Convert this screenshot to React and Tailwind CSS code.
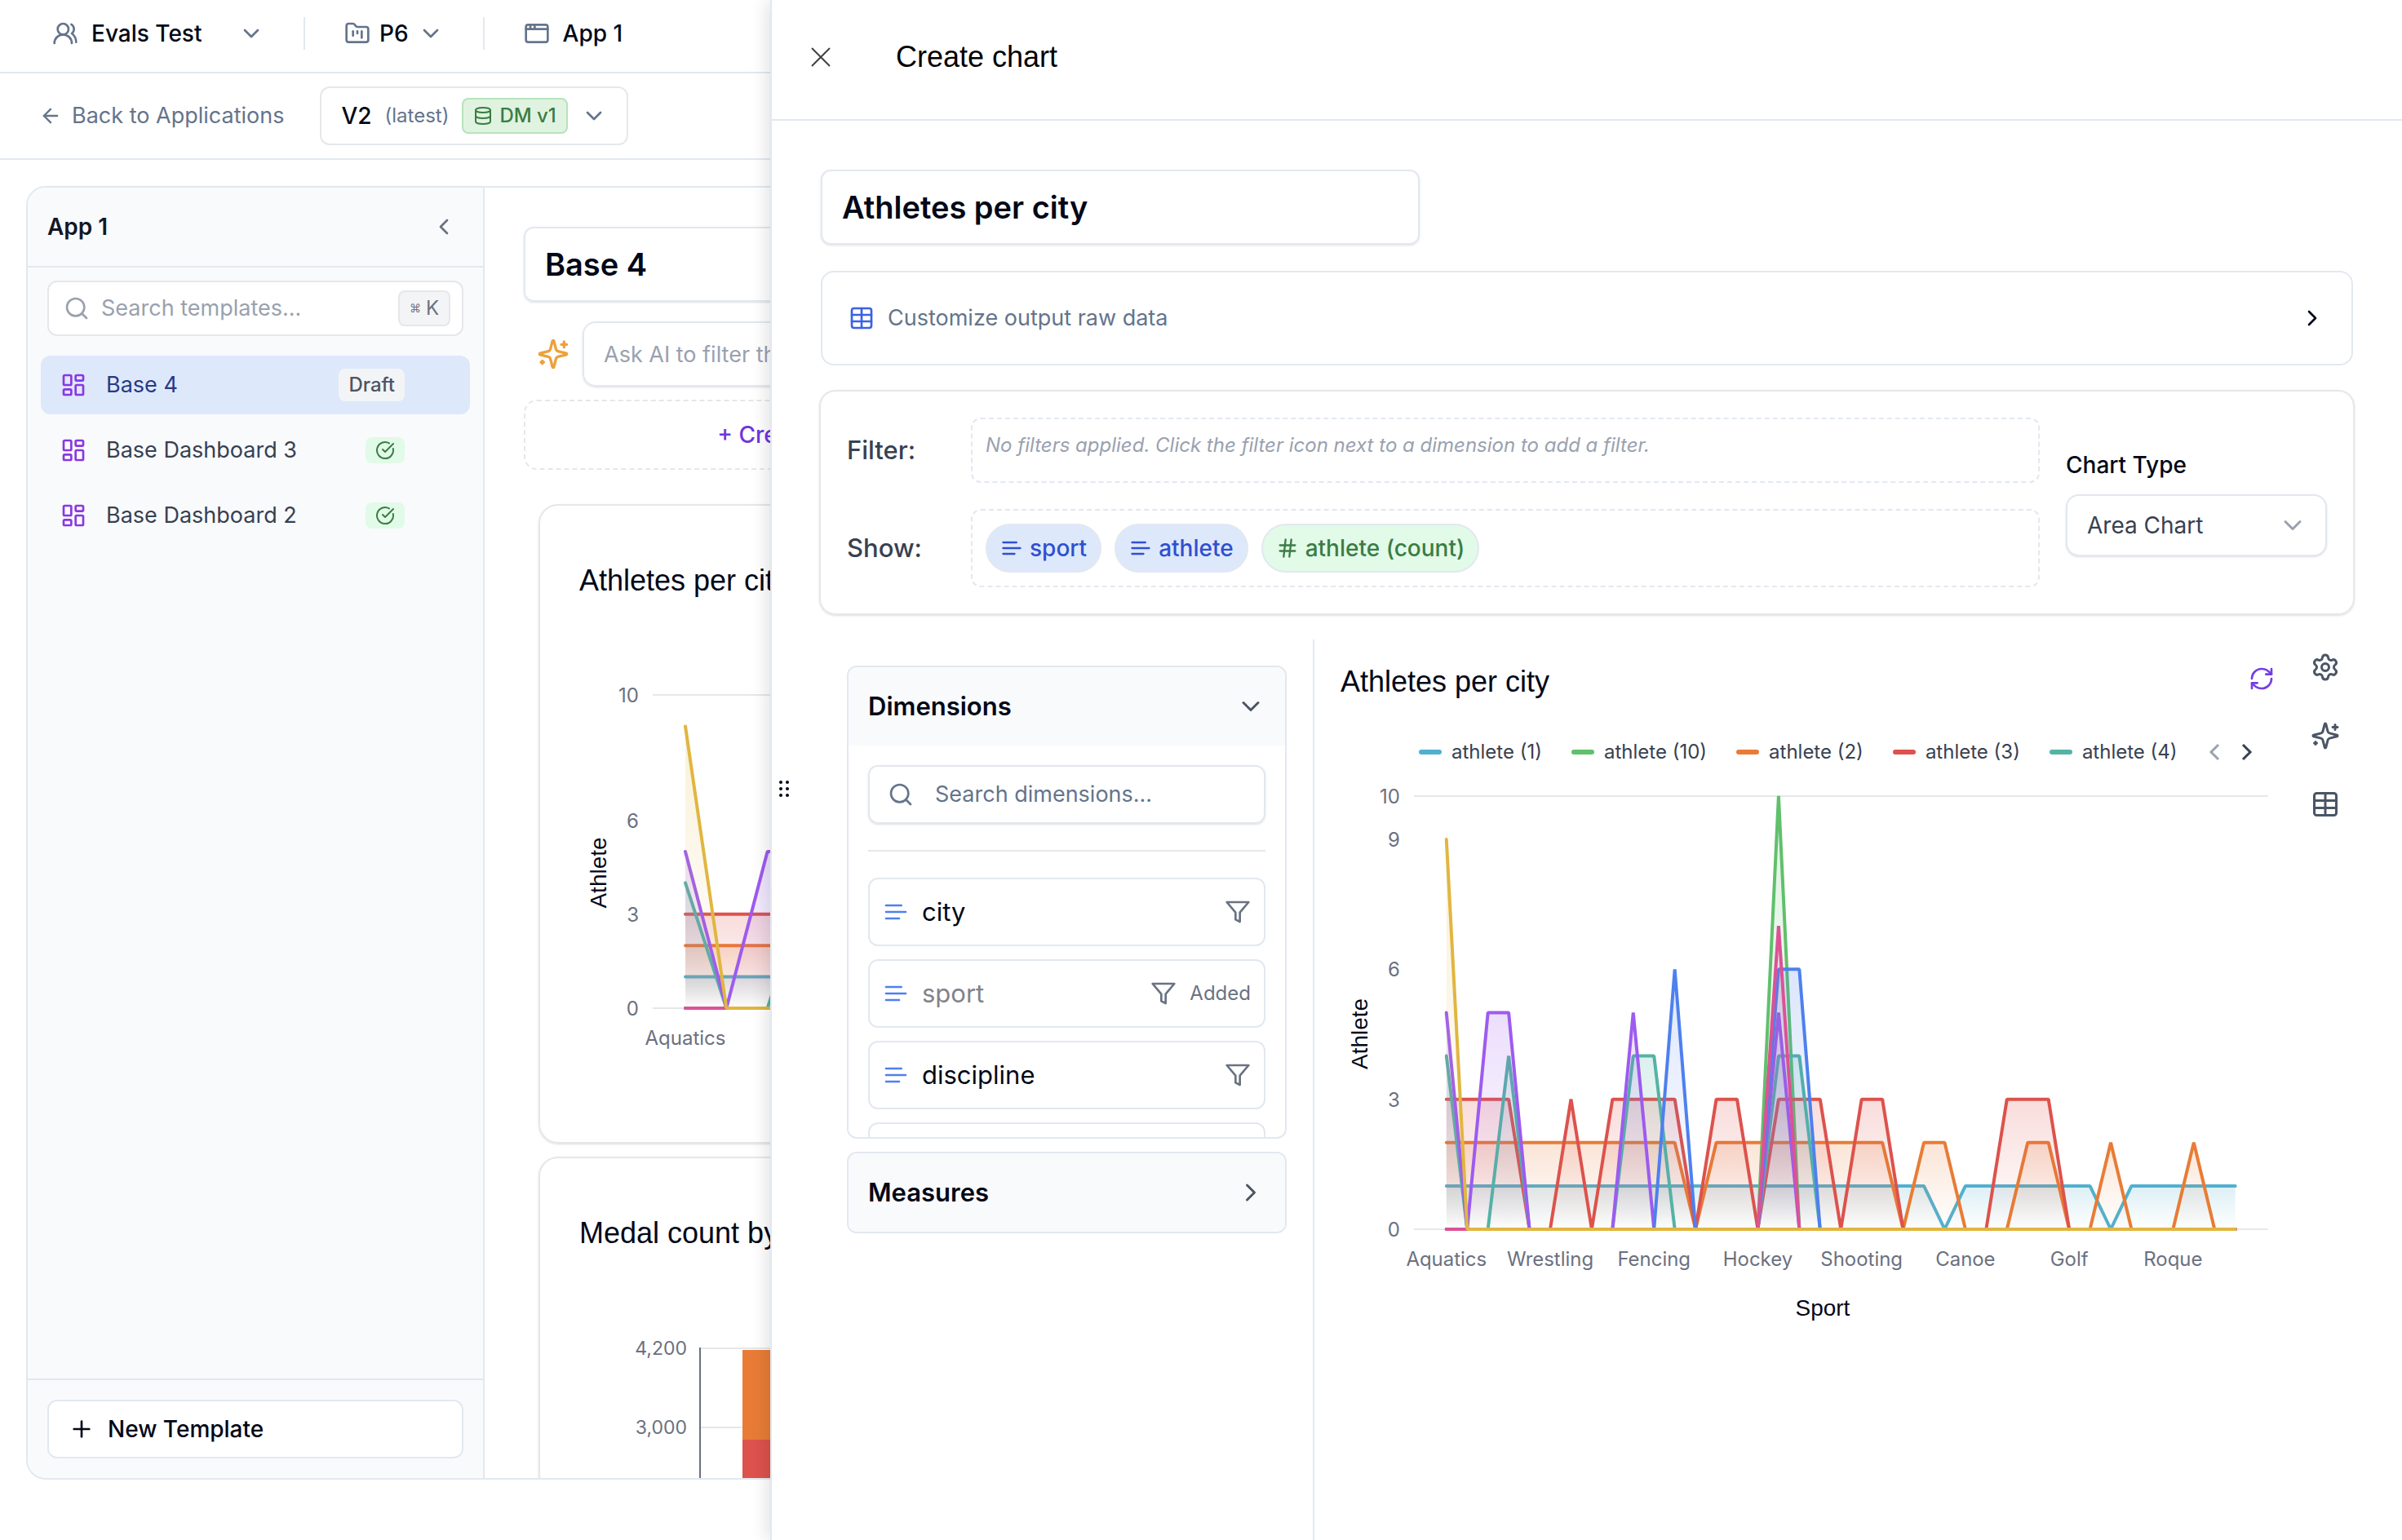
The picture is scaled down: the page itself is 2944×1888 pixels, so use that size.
// src/App.jsx
import React, { useState } from 'react';
import {
  AppWindow,
  ArrowLeft,
  ChevronDown,
  ChevronLeft,
  ChevronRight,
  CircleCheckBig,
  Database,
  FolderKanban,
  Hash,
  LayoutDashboard,
  Plus,
  RefreshCw,
  Search,
  Settings,
  Table,
  UsersRound,
} from 'lucide-react';

// non-zero values only, keyed by category index
const SERIES = [
  { name: 'athlete (1)', color: '#52b0cf', value: 1, at: [[0, 23], [25, 31], [33, 38]] },
  { name: 'athlete (10)', color: '#60c06c', value: 10, at: [[16, 16]] },
  { name: 'athlete (2)', color: '#e87c36', value: 2, at: [[0, 11], [13, 21], [23, 24], [28, 29], [32, 32], [36, 36]] },
  { name: 'athlete (3)', color: '#dd524c', value: 3, at: [[0, 3], [6, 6], [8, 11], [13, 14], [16, 18], [20, 21], [27, 29]] },
  { name: 'athlete (4)', color: '#54b3a4', value: 4, at: [[0, 0], [3, 3], [9, 10], [16, 17]] },
  { name: 'athlete (5)', color: '#9d5bef', value: 5, at: [[0, 0], [2, 3], [9, 9], [16, 16]] },
  { name: 'athlete (6)', color: '#4e80ee', value: 6, at: [[11, 11], [16, 17]] },
  { name: 'athlete (7)', color: '#db5296', value: 7, at: [[16, 16]] },
  { name: 'athlete (9)', color: '#e1b640', value: 9, at: [[0, 0]] },
];

const CATEGORY_COUNT = 39;
const SPORTS = ['Aquatics', 'Wrestling', 'Fencing', 'Hockey', 'Shooting', 'Canoe', 'Golf', 'Roque'];

const TEMPLATES = [
  { name: 'Base 4', status: 'draft', active: true },
  { name: 'Base Dashboard 3', status: 'published' },
  { name: 'Base Dashboard 2', status: 'published' },
];

const DIMENSIONS = [
  { name: 'city' },
  { name: 'sport', added: true },
  { name: 'discipline' },
];

const valueAt = (series, i) =>
  series.at.some(([from, to]) => i >= from && i <= to) ? series.value : 0;

const Sparkles = ({ size, className }) => (
  <svg
    width={size}
    height={size}
    viewBox="0 0 24 24"
    fill="none"
    stroke="currentColor"
    strokeWidth="2"
    strokeLinecap="round"
    strokeLinejoin="round"
    className={className}
  >
    <path d="M9.937 15.5A2 2 0 0 0 8.5 14.063l-6.135-1.582a.5.5 0 0 1 0-.962L8.5 9.936A2 2 0 0 0 9.937 8.5l1.582-6.135a.5.5 0 0 1 .963 0L14.063 8.5A2 2 0 0 0 15.5 9.937l6.135 1.581a.5.5 0 0 1 0 .964L15.5 14.063a2 2 0 0 0-1.437 1.437l-1.582 6.135a.5.5 0 0 1-.963 0z" />
    <path d="M20 3v4M22 5h-4M4 17v2M5 18H3" />
  </svg>
);

const TextLines = ({ size, className }) => (
  <svg
    width={size}
    height={size}
    viewBox="0 0 24 24"
    fill="none"
    stroke="currentColor"
    strokeWidth="2"
    strokeLinecap="round"
    className={className}
  >
    <path d="M17 6H3M21 12H3M15 18H3" />
  </svg>
);

const Funnel = ({ size, className }) => (
  <svg
    width={size}
    height={size}
    viewBox="0 0 24 24"
    fill="none"
    stroke="currentColor"
    strokeWidth="2"
    strokeLinecap="round"
    strokeLinejoin="round"
    className={className}
  >
    <polygon points="22 3 2 3 10 12.46 10 19 14 21 14 12.46 22 3" />
  </svg>
);

const AreaChart = ({ id, width, height, top, base, step, ticks, xTitle, yTitleAt }) => {
  const x0 = 130;
  const unit = (base - top) / 10;
  const right = x0 + step * (CATEGORY_COUNT - 1) + 40;

  return (
    <svg viewBox={`0 0 ${width} ${height}`} className="block w-full font-['Inter',sans-serif]" role="img" aria-label="Athletes per city">
      <defs>
        {SERIES.map((s) => (
          <linearGradient key={s.name} id={`${id}-${s.value}`} x1="0" y1="0" x2="0" y2="1">
            <stop offset="0" stopColor={s.color} stopOpacity="0.2" />
            <stop offset="1" stopColor={s.color} stopOpacity="0" />
          </linearGradient>
        ))}
      </defs>

      <path d={`M90 ${top}H${right}M90 ${base}H${right}`} stroke="#e5e7eb" strokeWidth="2" />

      {ticks.map((t) => (
        <text key={t} x="73" y={base - t * unit + 9} textAnchor="end" fontSize="24" fill="#6b7080">
          {t}
        </text>
      ))}
      {SPORTS.map((sport, i) => (
        <text key={sport} x={x0 + i * 5 * step} y={base + 45} textAnchor="middle" fontSize="24" fill="#6b7080">
          {sport}
        </text>
      ))}

      {SERIES.map((s) => {
        const pts = Array.from({ length: CATEGORY_COUNT }, (_, i) => `${x0 + i * step} ${base - valueAt(s, i) * unit}`);
        return (
          <g key={s.name}>
            <path d={`M${x0} ${base}L${pts.join('L')}L${x0 + step * (CATEGORY_COUNT - 1)} ${base}Z`} fill={`url(#${id}-${s.value})`} />
            <path d={`M${pts.join('L')}`} fill="none" stroke={s.color} strokeWidth="4" strokeLinecap="round" strokeLinejoin="bevel" />
          </g>
        );
      })}

      <text
        transform={`translate(33 ${yTitleAt}) rotate(-90)`}
        textAnchor="middle"
        fontSize="28"
        fill="#020817"
        className="font-['Liberation_Sans',sans-serif]"
      >
        Athlete
      </text>
      {xTitle && (
        <text x="592" y={base + 106} textAnchor="middle" fontSize="28" fill="#020817" className="font-['Liberation_Sans',sans-serif]">
          {xTitle}
        </text>
      )}
    </svg>
  );
};

const MedalChart = () => (
  <svg viewBox="0 0 2084 560" className="block w-full font-['Inter',sans-serif]" role="img" aria-label="Medal count">
    <path d="M148 119H2080M148 216H2080M148 313H2080M148 410H2080" stroke="#e5e7eb" strokeWidth="2" />
    <path d="M148 118V457" stroke="#6b7080" strokeWidth="2" />
    <text x="132" y="127" textAnchor="end" fontSize="23" fill="#6b7080">4,200</text>
    <text x="132" y="224" textAnchor="end" fontSize="23" fill="#6b7080">3,000</text>
    <rect x="200" y="121" width="160" height="110" fill="#e87c36" />
    <rect x="200" y="231" width="160" height="226" fill="#dd524c" />
  </svg>
);

const TopBar = () => (
  <header className="flex h-[90px] items-center gap-12 border-b-2 border-[#e2e8f0] px-16 pb-1.5 text-[28px] leading-10 font-medium text-[#020817]">
    <button type="button" className="flex w-[260px] items-center gap-4">
      <UsersRound size={32} className="text-[#64748b]" />
      <span className="flex-1 text-left">Evals Test</span>
      <ChevronDown size={32} className="text-[#64748b]" />
    </button>
    <span className="h-10 w-0.5 bg-[#e2e8f0]" />
    <button type="button" className="flex items-center gap-[11px]">
      <FolderKanban size={32} className="text-[#64748b]" />
      P6
      <ChevronDown size={32} className="text-[#64748b]" />
    </button>
    <span className="h-10 w-0.5 bg-[#e2e8f0]" />
    <a href="#app" className="flex items-center gap-4">
      <AppWindow size={32} className="text-[#64748b]" />
      App 1
    </a>
  </header>
);

const VersionBar = () => (
  <div className="flex h-[106px] items-center gap-11 border-b-2 border-[#e2e8f0] px-12 leading-10">
    <a href="#applications" className="flex items-center gap-3 text-[27px] text-[#64748b]">
      <ArrowLeft size={28} />
      Back to Applications
    </a>
    <button type="button" className="flex h-[72px] items-center gap-4 rounded-xl border-2 border-gray-200 bg-white px-6 text-[#020817]">
      <span className="text-[28px] font-medium">V2</span>
      <span className="text-2xl text-[#64748b]">(latest)</span>
      <span className="flex h-11 items-center gap-2 rounded-lg border-2 border-[#b7e3bc] bg-[#e0f3e0] px-3 text-2xl font-medium text-[#3a7d44]">
        <Database size={24} />
        DM v1
      </span>
      <ChevronDown size={32} className="text-[#64748b]" />
    </button>
  </div>
);

const Sidebar = () => (
  <aside className="flex w-[560px] shrink-0 flex-col border-r-2 border-gray-200 bg-[#f9fafc] leading-10">
    <div className="flex h-[98px] items-center justify-between border-b-2 border-gray-200 px-6">
      <h2 className="text-[28px] font-semibold text-[#111827]">App 1</h2>
      <button type="button" aria-label="Collapse sidebar" className="pr-2">
        <ChevronLeft size={32} className="text-gray-500" />
      </button>
    </div>

    <div className="px-6 pt-4 pb-6">
      <label className="flex h-[68px] items-center gap-3.5 rounded-xl border-2 border-gray-200 bg-white pr-3.5 pl-[18px]">
        <Search size={32} className="shrink-0 text-gray-400" />
        <input
          type="text"
          placeholder="Search templates..."
          aria-label="Search templates"
          className="min-w-0 flex-1 text-[27px] outline-none placeholder:text-gray-400"
        />
        <kbd className="flex h-11 items-center gap-1.5 rounded-lg border-2 border-gray-200 bg-gray-100 px-3 font-['Inter',sans-serif] text-2xl text-gray-500">
          <span className="font-['DejaVu_Sans',sans-serif] text-[14px]">⌘</span>K
        </kbd>
      </label>
    </div>

    <nav className="flex flex-1 flex-col gap-2 px-4 text-[27px]">
      {TEMPLATES.map((t) => (
        <button
          key={t.name}
          type="button"
          className={
            t.active
              ? 'flex h-[72px] items-center gap-6 rounded-xl bg-[#dee8fb] pr-20 pl-6 text-[#273a85]'
              : 'flex h-[72px] items-center gap-6 rounded-xl pr-20 pl-6 text-[#374151]'
          }
        >
          <LayoutDashboard size={32} className="text-[#8a38e0]" />
          <span className="flex-1 text-left">{t.name}</span>
          {t.status === 'draft' ? (
            <span className="rounded-lg bg-gray-100 px-3 text-2xl leading-10 font-medium text-gray-600">Draft</span>
          ) : (
            <span className="flex h-8 w-12 items-center justify-center rounded-lg bg-[#e2fae8]">
              <CircleCheckBig size={24} className="text-[#3a7d44]" />
            </span>
          )}
        </button>
      ))}
    </nav>

    <div className="border-t-2 border-gray-200 p-6">
      <button
        type="button"
        className="flex h-[72px] w-full items-center gap-4 rounded-xl border-2 border-[#e2e8f0] bg-white px-6 text-[28px] font-medium text-[#020817]"
      >
        <Plus size={32} />
        New Template
      </button>
    </div>
  </aside>
);

const Dashboard = () => (
  <main className="flex min-w-0 flex-1 flex-col overflow-hidden p-12">
    <input
      type="text"
      defaultValue="Base 4"
      aria-label="Template name"
      className="h-[92px] w-[734px] shrink-0 rounded-xl border-2 border-[#e2e8f0] px-6 text-[38px] font-semibold text-[#020817] shadow-sm"
    />
    <div className="mt-6 flex shrink-0 items-center gap-4 pl-4">
      <Sparkles size={40} className="text-[#eda13a]" />
      <input
        type="text"
        placeholder="Ask AI to filter the dashboard"
        aria-label="Ask AI"
        className="h-20 w-[1200px] rounded-2xl border-2 border-[#e2e8f0] px-6 text-[27px] shadow-sm placeholder:text-gray-400"
      />
    </div>
    <button
      type="button"
      className="mt-4 h-[86px] w-[590px] shrink-0 rounded-2xl border-2 border-dashed border-gray-200 text-[28px] font-medium text-[#6f35dc]"
    >
      + Create
    </button>

    <div className="mt-[42px] flex flex-col gap-4 px-[18px]">
      <section className="h-[784px] shrink-0 rounded-3xl border-2 border-gray-200 px-12 pt-[70px] shadow-sm">
        <h3 className="font-['Liberation_Sans',sans-serif] text-4xl leading-11 text-[#020817]">Athletes per city</h3>
        <AreaChart id="dash" width={2084} height={600} top={118} base={502} step={50.3} ticks={[0, 3, 6, 10]} yTitleAt={336} />
      </section>
      <section className="h-[784px] shrink-0 rounded-3xl border-2 border-gray-200 px-12 pt-[70px] shadow-sm">
        <h3 className="font-['Liberation_Sans',sans-serif] text-4xl leading-11 text-[#020817]">Medal count by country</h3>
        <MedalChart />
      </section>
    </div>
  </main>
);

const QueryCard = () => (
  <section className="mt-[30px] flex items-center gap-8 rounded-[20px] border-2 border-gray-200 p-8 shadow-sm">
    <div className="flex flex-1 flex-col gap-8">
      <div className="flex items-center">
        <span className="w-[152px] text-[31px] leading-10 font-medium text-[#374151]">Filter:</span>
        <div className="h-20 flex-1 rounded-xl border-2 border-dashed border-[#e2e8f0] p-4">
          <p className="text-2xl text-gray-400 italic">
            No filters applied. Click the filter icon next to a dimension to add a filter.
          </p>
        </div>
      </div>
      <div className="flex items-center">
        <span className="w-[152px] text-[31px] leading-10 font-medium text-[#374151]">Show:</span>
        <div className="flex h-24 flex-1 items-center gap-4 rounded-xl border-2 border-dashed border-[#e2e8f0] px-4 text-[28px] leading-10 font-medium">
          <button type="button" className="flex h-15 items-center gap-2 rounded-full border-2 border-[#e2e8f0] bg-[#dee8fb] px-4 text-[#2e50d0]">
            <TextLines size={28} />
            sport
          </button>
          <button type="button" className="flex h-15 items-center gap-2 rounded-full border-2 border-[#e2e8f0] bg-[#dee8fb] px-4 text-[#2e50d0]">
            <TextLines size={28} />
            athlete
          </button>
          <button type="button" className="flex h-15 items-center gap-2 rounded-full border-2 border-[#e2e8f0] bg-[#e2fae8] px-4 text-[#3a7d44]">
            <Hash size={28} />
            athlete (count)
          </button>
        </div>
      </div>
    </div>

    <div className="flex w-80 flex-col gap-4">
      <label htmlFor="chart-type" className="text-[28px] leading-10 font-medium text-[#020817]">
        Chart Type
      </label>
      <div className="relative">
        <select
          id="chart-type"
          defaultValue="area"
          className="h-[76px] w-full appearance-none rounded-2xl border-2 border-[#e2e8f0] bg-white px-6 text-[28px] text-[#374151] shadow-sm"
        >
          <option value="area">Area Chart</option>
          <option value="bar">Bar Chart</option>
          <option value="line">Line Chart</option>
        </select>
        <ChevronDown size={36} className="pointer-events-none absolute top-5 right-6 text-gray-400" />
      </div>
    </div>
  </section>
);

const FieldPanels = () => {
  const [dimensionsOpen, setDimensionsOpen] = useState(true);

  return (
    <div className="flex w-[607px] shrink-0 flex-col gap-4 border-r-2 border-[#e2e8f0] pt-8 pr-8 pl-[34px]">
      <section className="max-h-[580px] overflow-hidden rounded-xl border-2 border-[#e2e8f0]">
        <button
          type="button"
          onClick={() => setDimensionsOpen(!dimensionsOpen)}
          className="flex h-24 w-full items-center justify-between bg-[#f9fafc] px-6 text-[31px] font-semibold text-[#020817]"
        >
          Dimensions
          <ChevronDown size={36} className="text-gray-600" />
        </button>
        {dimensionsOpen && (
          <div className="px-6 pt-6">
            <label className="flex h-[72px] items-center gap-[26px] rounded-xl border-2 border-[#e2e8f0] px-[22px] shadow-sm">
              <Search size={32} className="shrink-0 text-[#64748b]" />
              <input
                type="text"
                placeholder="Search dimensions..."
                aria-label="Search dimensions"
                className="min-w-0 flex-1 text-[27px] outline-none placeholder:text-[#64748b]"
              />
            </label>
            <ul className="mt-8 flex flex-col gap-4 border-t-2 border-gray-200 pt-8">
              {DIMENSIONS.map((d) => (
                <li key={d.name} className="flex h-[84px] shrink-0 items-center gap-4 rounded-xl border-2 border-[#e2e8f0] px-4">
                  <TextLines size={32} className="text-[#4f7ff0]" />
                  <span className={d.added ? 'flex-1 text-[31px] text-[#808389]' : 'flex-1 text-[31px] text-[#020817]'}>{d.name}</span>
                  <button type="button" aria-label={`Filter ${d.name}`}>
                    <Funnel size={32} className="text-gray-500" />
                  </button>
                  {d.added && <span className="text-2xl text-gray-500">Added</span>}
                </li>
              ))}
              <li className="h-[84px] shrink-0 rounded-xl border-2 border-[#e2e8f0]" />
            </ul>
          </div>
        )}
      </section>
      <section className="overflow-hidden rounded-xl border-2 border-[#e2e8f0]">
        <button
          type="button"
          className="flex h-24 w-full items-center justify-between bg-[#f9fafc] px-6 text-[31px] font-semibold text-[#020817]"
        >
          Measures
          <ChevronRight size={36} className="text-gray-600" />
        </button>
      </section>
    </div>
  );
};

const ChartPreview = () => (
  <div className="flex min-w-0 flex-1 gap-11 pr-[18px] pl-8">
    <div className="min-w-0 flex-1 pt-[30px]">
      <div className="flex items-start justify-between">
        <h3 className="font-['Liberation_Sans',sans-serif] text-4xl leading-11 text-[#020817]">Athletes per city</h3>
        <button type="button" aria-label="Refresh chart" className="pt-0.5">
          <RefreshCw size={32} className="text-[#743ee4]" />
        </button>
      </div>
      <div className="mt-12 flex items-center pl-24 text-2xl leading-8 text-[#374151]">
        <ul className="flex gap-9">
          {SERIES.slice(0, 5).map((s) => (
            <li key={s.name} className="flex items-center gap-3 whitespace-nowrap">
              <span className="h-1.5 w-7 rounded-full" style={{ backgroundColor: s.color }} />
              {s.name}
            </li>
          ))}
        </ul>
        <button type="button" aria-label="Previous legend page" className="ml-[38px] text-[#9ca3af]">
          <svg width="14" height="22" viewBox="0 0 14 22" fill="none" stroke="currentColor" strokeWidth="3">
            <path d="M12 2 3 11l9 9" />
          </svg>
        </button>
        <button type="button" aria-label="Next legend page" className="ml-[26px] text-[#374151]">
          <svg width="14" height="22" viewBox="0 0 14 22" fill="none" stroke="currentColor" strokeWidth="3">
            <path d="m2 2 9 9-9 9" />
          </svg>
        </button>
      </div>
      <AreaChart
        id="preview"
        width={1147}
        height={700}
        top={38}
        base={570}
        step={25.49}
        ticks={[0, 3, 6, 9, 10]}
        yTitleAt={330}
        xTitle="Sport"
      />
    </div>

    <div className="flex flex-col gap-12 pt-4 text-gray-600">
      <button type="button" aria-label="Chart settings">
        <Settings size={36} />
      </button>
      <button type="button" aria-label="AI suggestions">
        <Sparkles size={36} />
      </button>
      <button type="button" aria-label="Show data table">
        <Table size={36} />
      </button>
    </div>
  </div>
);

const CreateChartDrawer = () => (
  <div
    role="dialog"
    aria-label="Create chart"
    className="absolute inset-y-0 right-0 left-[944px] flex flex-col border-l-2 border-[#e2e8f0] bg-white shadow-[-4px_0_20px_rgba(0,0,0,0.12)]"
  >
    <div className="flex items-center gap-20 border-b-2 border-[#e2e8f0] px-12 pt-12 pb-[54px]">
      <button type="button" aria-label="Close">
        <svg width="24" height="24" viewBox="0 0 24 24" fill="none" stroke="#404040" strokeWidth="2">
          <path d="M1 1l22 22M23 1 1 23" />
        </svg>
      </button>
      <h2 className="font-['Liberation_Sans',sans-serif] text-4xl leading-11 text-black">Create chart</h2>
    </div>

    {/* resize handle */}
    <svg width="12" height="20" viewBox="0 0 12 20" fill="#020817" className="absolute top-[957px] left-[9px]">
      <circle cx="2" cy="2" r="2" />
      <circle cx="10" cy="2" r="2" />
      <circle cx="2" cy="10" r="2" />
      <circle cx="10" cy="10" r="2" />
      <circle cx="2" cy="18" r="2" />
      <circle cx="10" cy="18" r="2" />
    </svg>

    <div className="flex min-h-0 flex-1 flex-col px-[58px] pt-15">
      <div className="flex flex-col gap-8 px-0.5">
        <input
          type="text"
          defaultValue="Athletes per city"
          aria-label="Chart name"
          className="h-[92px] w-[734px] rounded-xl border-2 border-[#e2e8f0] px-6 text-[38px] font-semibold text-[#020817] shadow-sm"
        />
        <button
          type="button"
          className="flex h-[116px] items-center gap-4 rounded-2xl border-2 border-[#e2e8f0] px-8 text-[27px] text-[#64748b]"
        >
          <Table size={32} className="text-[#3b62e3]" />
          <span className="flex-1 text-left">Customize output raw data</span>
          <ChevronRight size={32} className="text-[#020817]" />
        </button>
      </div>

      <QueryCard />

      <div className="mt-[30px] flex min-h-0 flex-1">
        <FieldPanels />
        <ChartPreview />
      </div>
    </div>
  </div>
);

const App = () => (
  <div className="relative flex h-screen flex-col overflow-hidden bg-white font-['Inter',sans-serif]">
    <TopBar />
    <VersionBar />
    <div className="mx-8 mt-8 mb-[74px] flex min-h-0 flex-1 overflow-hidden rounded-3xl border-2 border-[#e2e8f0]">
      <Sidebar />
      <Dashboard />
    </div>
    <CreateChartDrawer />
  </div>
);

export default App;
